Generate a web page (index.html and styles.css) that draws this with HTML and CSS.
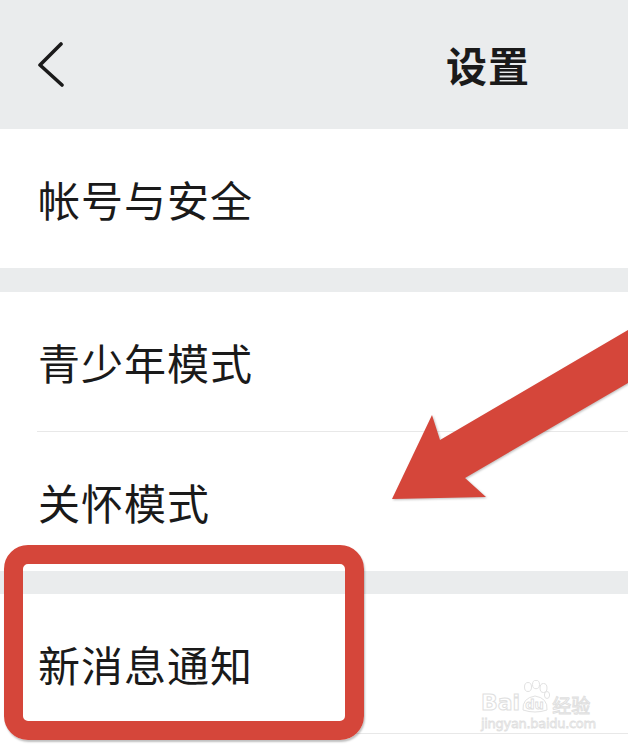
FILE: index.html
```html
<!DOCTYPE html>
<html lang="zh-CN">
<head>
  <meta charset="UTF-8" />
  <meta name="viewport" content="width=device-width, initial-scale=1" />
  <title>设置</title>
  <link rel="stylesheet" href="styles.css">
</head>
<body>

  <!-- Шапка -->
  <header class="top-bar">
    <svg class="back-icon" width="30" height="46" viewBox="0 0 30 46">
      <polyline points="24,3 3,24 25,44" fill="none" stroke="#1a1a1a" stroke-width="3.6" stroke-linecap="round" stroke-linejoin="round" />
    </svg>
    <h1 class="title">设置</h1>
  </header>

  <!-- Группы настроек -->
  <section class="group">
    <div class="row">帐号与安全</div>
  </section>

  <section class="group">
    <div class="row">青少年模式</div>
    <div class="row">关怀模式</div>
  </section>

  <section class="group last">
    <div class="row">新消息通知</div>
    <div class="row tail"></div>
  </section>

  <!-- Пометки поверх скриншота -->
  <div class="mark-box"></div>
  <svg class="mark-arrow" width="628" height="746" viewBox="0 0 628 746">
    <polygon points="392,499 432,415 440,440 640,323 640,376 465,478 486,497" fill="#d5463a" />
  </svg>

  <!-- Водяной знак -->
  <div class="watermark">
    <div class="wm-logo">
      <span>Bai</span>
      <span class="wm-paw">
        <svg width="30" height="34" viewBox="0 0 30 34">
          <g fill="#fff" stroke="#e2e2e2" stroke-width="1">
            <ellipse cx="8" cy="7" rx="3.5" ry="4.5" />
            <ellipse cx="16" cy="4.5" rx="3.5" ry="4.2" />
            <ellipse cx="23.5" cy="8" rx="3.5" ry="4.5" />
            <ellipse cx="27" cy="15" rx="2.6" ry="3.5" />
            <path d="M3 30 Q2 18 15 16 Q28 18 27 30 Q15 34 3 30 Z" />
          </g>
        </svg>
        <span class="wm-du">du</span>
      </span>
      <span class="wm-cn">经验</span>
    </div>
    <div class="wm-url">jingyan.baidu.com</div>
  </div>

</body>
</html>
```

FILE: styles.css
```css
  /* Общие настройки */
  *, *::before, *::after { box-sizing: border-box; }
  body {
    margin: 0;
    width: 628px;
    height: 746px;
    overflow: hidden;
    position: relative;
    background: #eaeced;
    font-family: "Noto Sans CJK SC", "Noto Sans", sans-serif;
    color: #1a1a1a;
  }

  /* Шапка */
  .top-bar {
    height: 129px;
    display: flex;
    align-items: center;
    padding-left: 37px;
  }
  .back-icon {
    display: block;
    margin-top: -1px;
  }
  .title {
    margin: 0 0 0 379px;
    font-size: 41px;
    font-weight: 700;
    letter-spacing: 1px;
    line-height: 1;
  }

  /* Группы и строки */
  .group {
    background: #fff;
    margin-bottom: 23px;
  }
  .group:first-of-type { margin-bottom: 24px; }
  .group.last { margin-bottom: 0; }
  .row {
    height: 139px;
    display: flex;
    align-items: center;
    padding-left: 38px;
    font-size: 42px;
    letter-spacing: 1px;
    line-height: 1;
  }
  .row + .row {
    height: 140px;
    margin-left: 37px;
    padding-left: 1px;
    border-top: 1px solid #e8e8e8;
  }
  .row.tail { height: 13px; }

  /* Красная рамка */
  .mark-box {
    position: absolute;
    left: 4px;
    top: 545px;
    width: 360px;
    height: 195px;
    border: 19px solid #d5463a;
    border-radius: 24px;
    box-shadow: 1px 2px 2px rgba(0, 0, 0, 0.25);
  }
  .mark-arrow {
    position: absolute;
    left: 0;
    top: 0;
    filter: drop-shadow(1px 1px 1px rgba(0, 0, 0, 0.25));
  }

  /* Водяной знак */
  .watermark {
    position: absolute;
    left: 481px;
    top: 676px;
    width: 114px;
    color: #fff;
    font-family: "DejaVu Sans", sans-serif;
  }
  .wm-logo {
    display: flex;
    align-items: flex-end;
    height: 38px;
    font-size: 22px;
    font-weight: 700;
    -webkit-text-stroke: 1px #e0e0e0;
    line-height: 1;
  }
  .wm-paw {
    position: relative;
    width: 30px;
    height: 34px;
  }
  .wm-paw svg { display: block; }
  .wm-du {
    position: absolute;
    left: 5px;
    bottom: 3px;
    font-size: 13px;
    -webkit-text-stroke: 0.8px #dcdcdc;
  }
  .wm-cn {
    margin-left: 2px;
    font-family: "Noto Sans CJK SC", sans-serif;
    font-size: 19px;
    font-weight: 400;
    -webkit-text-stroke: 1px #e0e0e0;
  }
  .wm-url {
    margin-top: 3px;
    font-size: 13px;
    line-height: 1;
    letter-spacing: -0.3px;
    -webkit-text-stroke: 0.8px #e0e0e0;
    white-space: nowrap;
  }
```
